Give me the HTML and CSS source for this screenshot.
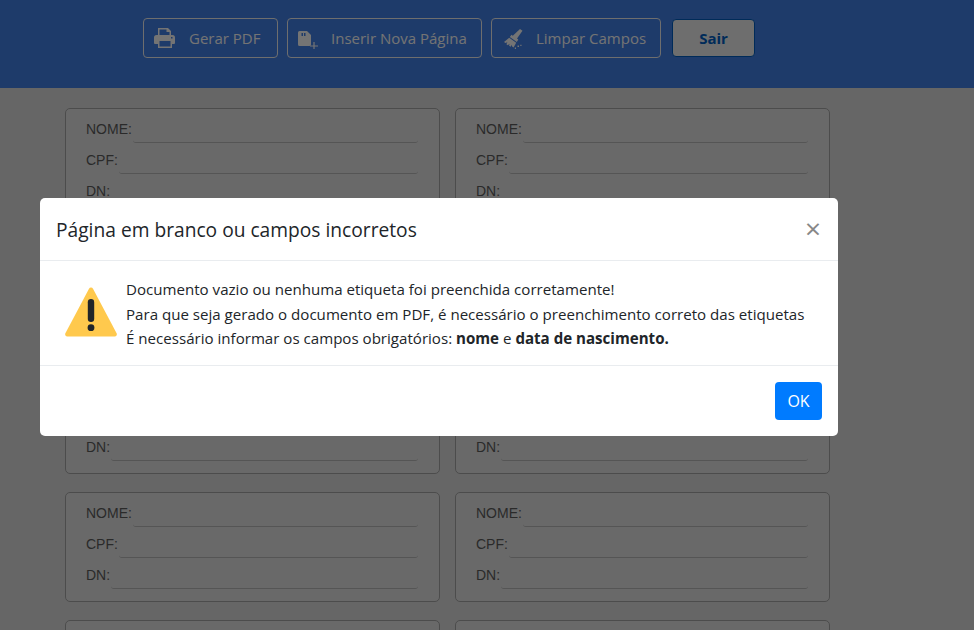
FILE: index.html
```html
<!DOCTYPE html>
<html>
<head>
    <title>Etiquetas</title>
    <link rel="stylesheet" href="styles.css">
</head>
<body>
    <div class="topo">
        <button class="btn-topo btn-pdf">
            <svg class="icone" viewBox="0 0 22 22"><path fill-rule="evenodd" d="M4 1h10l3 3v4h-1.500V5h-3V2.500h-7V8H4z"/><path fill-rule="evenodd" d="M2.500 8h16A2.500 2.500 0 0 1 21 10.500V16a1 1 0 0 1-1 1h-2v4H4v-4H1a1 1 0 0 1-1-1v-5.500A2.500 2.500 0 0 1 2.500 8zM5.500 14v5.500h11V14zM17 10v1.500h1.500V10z"/></svg>
            <span>Gerar PDF</span>
        </button>
        <button class="btn-topo btn-pagina">
            <svg class="icone" viewBox="0 0 22 22"><path fill-rule="evenodd" d="M1.500 4H9l4 4v9.500a1.500 1.500 0 0 1-1.500 1.500h-10A1.500 1.500 0 0 1 0 17.500v-12A1.500 1.500 0 0 1 1.500 4zM3.500 6v3H5V6zM6 6v3h1.500V6z"/><path d="M15.400 15h1.200v3.400H20v1.200h-3.400V23h-1.200v-3.400H12v-1.200h3.400z"/></svg>
            <span>Inserir Nova Página</span>
        </button>
        <button class="btn-topo btn-limpar">
            <svg class="icone" viewBox="0 0 22 22"><path d="M18 2l2.500 1.800-5.500 7.700 1.300 1-1.500 2.400-7-5 1.700-2.200 1.300 1z"/><path d="M7.200 10.800l7 5-2.600 4.700-1.500-1-.3-1.700-1.100 2-1.600-1 .4-2-1.700 1.400-1.400-1 1-1.900-2 .8-1.400-1z"/><path d="M15.500 18.500h1.500V20h-1.500zM18.300 17.800h1.200V19h-1.200zM12.800 20.500H14V22h-1.200z"/></svg>
            <span>Limpar Campos</span>
        </button>
        <button class="btn-sair">Sair</button>
    </div>

    <div class="etiquetas">
        <div class="etiqueta">
            <div class="campo"><label>NOME:</label><input type="text"></div>
            <div class="campo"><label>CPF:</label><input type="text"></div>
            <div class="campo"><label>DN:</label><input type="text"></div>
        </div>
        <div class="etiqueta">
            <div class="campo"><label>NOME:</label><input type="text"></div>
            <div class="campo"><label>CPF:</label><input type="text"></div>
            <div class="campo"><label>DN:</label><input type="text"></div>
        </div>
        <div class="etiqueta">
            <div class="campo"><label>NOME:</label><input type="text"></div>
            <div class="campo"><label>CPF:</label><input type="text"></div>
            <div class="campo"><label>DN:</label><input type="text"></div>
        </div>
        <div class="etiqueta">
            <div class="campo"><label>NOME:</label><input type="text"></div>
            <div class="campo"><label>CPF:</label><input type="text"></div>
            <div class="campo"><label>DN:</label><input type="text"></div>
        </div>
        <div class="etiqueta">
            <div class="campo"><label>NOME:</label><input type="text"></div>
            <div class="campo"><label>CPF:</label><input type="text"></div>
            <div class="campo"><label>DN:</label><input type="text"></div>
        </div>
        <div class="etiqueta">
            <div class="campo"><label>NOME:</label><input type="text"></div>
            <div class="campo"><label>CPF:</label><input type="text"></div>
            <div class="campo"><label>DN:</label><input type="text"></div>
        </div>
        <div class="etiqueta">
            <div class="campo"><label>NOME:</label><input type="text"></div>
            <div class="campo"><label>CPF:</label><input type="text"></div>
            <div class="campo"><label>DN:</label><input type="text"></div>
        </div>
        <div class="etiqueta">
            <div class="campo"><label>NOME:</label><input type="text"></div>
            <div class="campo"><label>CPF:</label><input type="text"></div>
            <div class="campo"><label>DN:</label><input type="text"></div>
        </div>
        <div class="etiqueta"></div>
        <div class="etiqueta"></div>
    </div>

    <div class="fundo-modal"></div>
    <div class="modal">
        <div class="modal-topo">
            <h5>Página em branco ou campos incorretos</h5>
            <span class="fechar">&times;</span>
        </div>
        <div class="modal-corpo">
            <svg class="alerta" viewBox="0 0 52 56"><path d="M26 2.500a2.500 2.500 0 0 1 2 1.200l23.600 44.600a2.200 2.200 0 0 1-1.900 3.200H2.300a2.200 2.200 0 0 1-1.900-3.200L24 3.700a2.500 2.500 0 0 1 2-1.200z" fill="#ffc94d"/><rect x="22.800" y="14" width="6.400" height="23" rx="3.200" fill="#212529"/><circle cx="26" cy="42.700" r="3.400" fill="#212529"/></svg>
            <div class="mensagem">
                <div>Documento vazio ou nenhuma etiqueta foi preenchida corretamente!</div>
                <div>Para que seja gerado o documento em PDF, é necessário o preenchimento correto das etiquetas</div>
                <div>É necessário informar os campos obrigatórios: <b>nome</b> e <b>data de nascimento.</b></div>
            </div>
        </div>
        <div class="modal-rodape">
            <button class="btn-ok">OK</button>
        </div>
    </div>
</body>
</html>
```

FILE: styles.css
```css
html, body {
    height: 100%;
}

body {
    margin: 0;
    overflow: hidden;
    background-color: #ccc;
    font-family: "Liberation Sans", Arial, sans-serif;
}

.topo {
    display: flex;
    align-items: center;
    height: 88px;
    padding: 0 0 12px 143px;
    box-sizing: border-box;
    background-color: #3c76d4;
}

.btn-topo {
    display: flex;
    align-items: center;
    gap: 12px;
    height: 40px;
    margin-right: 9px;
    padding: 0 0 0 10px;
    background: none;
    border: 1px solid #ddd;
    border-radius: 4px;
    color: #e8e8e8;
    font-family: "Open Sans", sans-serif;
    font-size: 15px;
}

.btn-pdf {
    width: 135px;
    gap: 13px;
}

.btn-pagina {
    width: 195px;
    gap: 11px;
}

.btn-limpar {
    width: 170px;
}

.icone {
    width: 22px;
    height: 22px;
    fill: #e8e8e8;
}

.btn-sair {
    width: 83px;
    height: 38px;
    margin-left: 2px;
    background-color: #dcdcdc;
    border: 1px solid #0056b3;
    border-radius: 4px;
    color: #0056b3;
    font-family: "Open Sans", sans-serif;
    font-size: 15px;
    font-weight: bold;
}

.etiquetas {
    display: grid;
    grid-template-columns: 375px 375px;
    gap: 18px 15px;
    padding: 20px 0 0 65px;
}

.etiqueta {
    height: 110px;
    box-sizing: border-box;
    padding: 4px 21px 0 20px;
    background-color: #d2d2d2;
    border: 1px solid #999;
    border-radius: 5px;
}

.campo {
    display: flex;
    height: 31px;
    align-items: center;
    font-size: 14px;
    color: #555;
}

.campo input {
    flex: 1;
    min-width: 0;
    height: 26px;
    margin: 2px 0 0 1px;
    box-sizing: border-box;
    background: none;
    border: none;
    border-bottom: 1px solid #aaa;
    border-radius: 3px;
}

.fundo-modal {
    position: fixed;
    top: 0;
    left: 0;
    right: 0;
    bottom: 0;
    background-color: rgba(0,0,0,0.5);
}

.modal {
    position: fixed;
    top: 198px;
    left: 40px;
    width: 798px;
    height: 238px;
    box-sizing: border-box;
    background-color: #fff;
    border-radius: 5px;
    color: #212529;
    font-family: "Open Sans", sans-serif;
}

.modal-topo {
    display: flex;
    justify-content: space-between;
    align-items: center;
    height: 63px;
    box-sizing: border-box;
    padding: 0 18px 0 16px;
    border-bottom: 1px solid #e9ecef;
}

.modal-topo h5 {
    margin: 0;
    font-size: 19.2px;
    font-weight: 530;
}

.fechar {
    margin: -2px -1px 0 0;
    color: #888;
    font-size: 28px;
    font-weight: 500;
}

.modal-corpo {
    display: flex;
    align-items: center;
    height: 105px;
    box-sizing: border-box;
    padding: 0 16px 0 25px;
    border-bottom: 1px solid #e9ecef;
}

.alerta {
    width: 52px;
    height: 56px;
    margin-right: 9px;
}

.mensagem {
    margin-top: 2px;
    font-size: 15.1px;
    line-height: 24.5px;
}

.modal-rodape {
    display: flex;
    justify-content: flex-end;
    padding: 16px;
}

.btn-ok {
    width: 47px;
    height: 38px;
    background-color: #007bff;
    border: none;
    border-radius: 4px;
    color: #fff;
    font-family: "Open Sans", sans-serif;
    font-size: 16px;
}
```
